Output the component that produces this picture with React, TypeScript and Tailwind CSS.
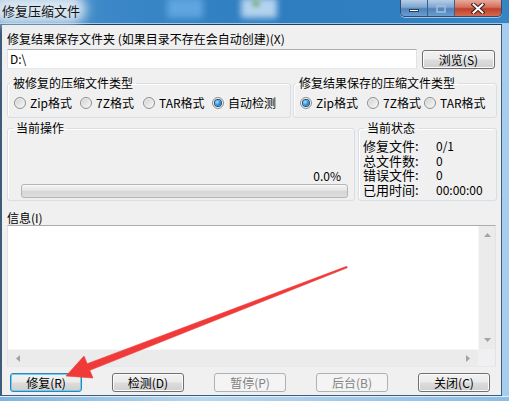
import type { ReactNode } from "react";

type BtnKind = "normal" | "focus" | "disabled";

const btnStyles: Record<BtnKind, string> = {
  normal:
    "border-[#707070] bg-[linear-gradient(#f2f2f2_0%,#ebebeb_48%,#dddddd_52%,#cfcfcf_100%)] text-black shadow-[inset_0_0_0_1px_#fbfbfb]",
  focus:
    "border-[#3c7fb1] bg-[linear-gradient(#f2f2f2_0%,#ebebeb_48%,#dddddd_52%,#cfcfcf_100%)] text-black shadow-[inset_0_0_0_1px_#5fd3f8]",
  disabled: "border-[#adb2b5] bg-[#f4f4f4] text-[#838383]",
};

function Btn({ children, kind = "normal", className = "" }: { children: ReactNode; kind?: BtnKind; className?: string }) {
  return (
    <button
      type="button"
      className={`flex h-[19px] items-center justify-center rounded-[3px] border text-[12px] leading-none ${btnStyles[kind]} ${className}`}
    >
      {children}
    </button>
  );
}

function Radio({ label, checked, className = "" }: { label: string; checked?: boolean; className?: string }) {
  return (
    <div className={`flex items-center gap-[4px] ${className}`}>
      <span className="flex h-[12px] w-[12px] shrink-0 items-center justify-center rounded-full border border-[#8e8f8f] bg-[linear-gradient(135deg,#cfd0d0,#f9f9f9)] shadow-[inset_0_0_0_1px_#f1f1f1]">
        {checked && (
          <span className="h-[6px] w-[6px] rounded-full bg-[radial-gradient(circle_at_35%_35%,#a6e4ff,#2c8ad2_55%,#0f4f94)] shadow-[0_0_0_1px_#1b5390]" />
        )}
      </span>
      <span className="whitespace-nowrap font-normal">{label}</span>
    </div>
  );
}

function Group({
  title,
  className = "",
  legendClass = "ml-[2px]",
  children,
}: {
  title: string;
  className?: string;
  legendClass?: string;
  children: ReactNode;
}) {
  return (
    <fieldset className={`rounded-[3px] border border-[#d5dfe5] shadow-[inset_1px_1px_0_#fff] ${className}`}>
      <legend className={`px-[3px] leading-[14px] ${legendClass}`}>{title}</legend>
      {children}
    </fieldset>
  );
}

function Arrow({ dir }: { dir: "up" | "down" | "left" | "right" }) {
  const pts = {
    up: "0,4 3.5,0 7,4",
    down: "0,0 3.5,4 7,0",
    left: "4,0 0,3.5 4,7",
    right: "0,0 4,3.5 0,7",
  }[dir];
  const vertical = dir === "up" || dir === "down";
  return (
    <svg width={vertical ? 7 : 4} height={vertical ? 4 : 7} viewBox={vertical ? "0 0 7 4" : "0 0 4 7"}>
      <polygon points={pts} fill="#a3a3a3" />
    </svg>
  );
}

function WindowControls() {
  return (
    <div className="absolute right-[7px] top-0 flex h-[17px] overflow-hidden rounded-b-[5px] border border-t-0 border-[#2f4d6e] shadow-[0_1px_0_#9cc4e6]">
      <div className="flex w-[27px] items-end justify-center border-r border-[#3c5f86] bg-[linear-gradient(#b5cde6_0%,#7ea6d1_45%,#4e82bb_55%,#6a9dd0_100%)] pb-[4px]">
        <span className="h-[3px] w-[10px] border border-[#2b3f57] bg-white" />
      </div>
      <div className="flex w-[27px] items-center justify-center border-r border-[#3c5f86] bg-[linear-gradient(#b5cde6_0%,#7ea6d1_45%,#4e82bb_55%,#6a9dd0_100%)]">
        <span className="mt-[1px] h-[8px] w-[10px] border-2 border-[#9fbddd] opacity-80" />
      </div>
      <div className="flex w-[46px] items-center justify-center bg-[linear-gradient(#e9a99b_0%,#d4705d_45%,#c0402c_55%,#d56a4f_100%)]">
        <svg width="14" height="11" viewBox="0 0 14 11">
          <path d="M2.5 1.5 L11.5 9.5 M11.5 1.5 L2.5 9.5" stroke="#3b1d1a" strokeWidth="4" strokeLinecap="square" />
          <path d="M2.5 1.5 L11.5 9.5 M11.5 1.5 L2.5 9.5" stroke="#ffffff" strokeWidth="2" strokeLinecap="square" />
        </svg>
      </div>
    </div>
  );
}

const statusRows: [string, string][] = [
  ["修复文件:", "0/1"],
  ["总文件数:", "0"],
  ["错误文件:", "0"],
  ["已用时间:", "00:00:00"],
];

export default function App() {
  return (
    <div className="relative flex h-[401px] w-[509px] flex-col overflow-hidden bg-[#a6cdee] font-['Noto_Sans_CJK_SC',sans-serif] text-[12px] text-black">
      {/* title bar */}
      <div className="relative h-[24px] shrink-0 border-b border-[#a3c9ea] bg-[linear-gradient(90deg,#5b9ad2_0%,#3b87c7_22%,#2d7dbf_55%,#2f7fc1_80%,#3785c5_100%)]">
        <div className="absolute left-[167px] top-[-2px] h-[20px] w-[36px] bg-[#5fa5df] blur-[3px]" />
        <div className="absolute left-[241px] top-[-2px] h-[20px] w-[36px] bg-[#b5d3ee] blur-[3px]" />
        <div className="absolute left-[252px] top-[0px] h-[7px] w-[8px] rounded-full bg-[#7db58a] blur-[2px]" />
        <div className="absolute left-[-10px] top-[-6px] h-[30px] w-[96px] rounded-full bg-[#d9e6f1] blur-[6px]" />
        <div className="relative pl-[2px] pt-[3px] text-[13px] leading-[15px] text-[#111]">修复压缩文件</div>
        <WindowControls />
      </div>

      {/* client area */}
      <div className="flex h-[372px] w-[502px] shrink-0 flex-col border border-l-2 border-[#3f5b7a] border-t-[#1f3d5e] bg-[#f0f0f0] pl-[5px] pr-[4px] pt-[7px]">
        <div className="leading-[14px]">修复结果保存文件夹 (如果目录不存在会自动创建)(X)</div>

        <div className="mt-[3px] flex h-[20px] items-start">
          <div className="flex h-[20px] w-[410px] items-center border border-[#e2e3ea] border-t-[#abadb3] border-b-[#e3e9ef] bg-white pl-[2px] leading-none">
            D:\
          </div>
          <Btn className="ml-[5px] mt-[1px] w-[73px]">浏览(S)</Btn>
        </div>

        <div className="mt-[7px] flex gap-[2px]">
          <Group title="被修复的压缩文件类型" className="h-[42px] w-[284px]">
            <div className="mt-[6px] flex h-[14px] items-center pl-[6px]">
              <Radio label="Zip格式" className="w-[66px]" />
              <Radio label="7Z格式" className="w-[63px]" />
              <Radio label="TAR格式" className="w-[69px]" />
              <Radio label="自动检测" checked />
            </div>
          </Group>
          <Group title="修复结果保存的压缩文件类型" className="h-[42px] w-[204px]">
            <div className="mt-[6px] flex h-[14px] items-center pl-[6px]">
              <Radio label="Zip格式" checked className="w-[67px]" />
              <Radio label="7Z格式" className="w-[57px]" />
              <Radio label="TAR格式" />
            </div>
          </Group>
        </div>

        <div className="mt-[3px] flex gap-[3px]">
          <Group title="当前操作" className="h-[80px] w-[348px]" legendClass="ml-[5px]">
            <div className="pl-[13px] pr-[6px] pt-[34px]">
              <div className="pr-[7px] text-right leading-[14px]">0.0%</div>
              <div className="mt-[1px] h-[14px] rounded-[3px] border border-[#b4b4b4] bg-[linear-gradient(#f4f4f4_0%,#e4e4e4_45%,#d6d6d6_55%,#dfdfdf_100%)] shadow-[inset_0_1px_0_#fafafa]" />
            </div>
          </Group>
          <Group title="当前状态" className="h-[80px] w-[139px]" legendClass="ml-[5px]">
            <div className="pl-[4px] pt-[4px]">
              {statusRows.map(([k, v]) => (
                <div key={k} className="flex h-[14.5px] items-center leading-[14px]">
                  <span className="w-[73px] text-[13px] leading-[14px]">{k}</span>
                  <span className="leading-[14px]">{v}</span>
                </div>
              ))}
            </div>
          </Group>
        </div>

        <div className="mt-[10px] leading-[14px]">信息(I)</div>

        <div className="grid h-[142px] w-[489px] grid-cols-[1fr_17px] grid-rows-[1fr_17px] border border-[#e2e3ea] border-t-[#abadb3] border-b-[#e3e9ef] bg-white">
          <div />
          <div className="flex flex-col items-center justify-between border-l border-[#f7f7f7] bg-[#ebebeb] py-[7px]">
            <Arrow dir="up" />
            <Arrow dir="down" />
          </div>
          <div className="flex items-center justify-between border-t border-[#f7f7f7] bg-[#ebebeb] px-[8px]">
            <Arrow dir="left" />
            <Arrow dir="right" />
          </div>
          <div className="bg-[#f0f0f0]" />
        </div>

        <div className="mt-[6px] flex gap-[30px] pl-[3px]">
          <Btn kind="focus" className="w-[72px]">修复(R)</Btn>
          <Btn className="w-[72px]">检测(D)</Btn>
          <Btn kind="disabled" className="w-[72px]">暂停(P)</Btn>
          <Btn kind="disabled" className="w-[72px]">后台(B)</Btn>
          <Btn className="w-[72px]">关闭(C)</Btn>
        </div>
      </div>

      {/* bottom frame */}
      <div className="h-[5px] border-t border-[#e4eef7] bg-[linear-gradient(90deg,#7fb3e0,#b7d6ef_40%,#8dbce4)]" />

      {/* red annotation arrow */}
      <svg className="pointer-events-none absolute left-0 top-0" width="509" height="401" viewBox="0 0 509 401">
        <polygon
          points="66,376 84,356 87.2,363.7 346.7,266.3 347.3,267.7 89.8,370.3 93,378"
          fill="#f03a3a"
          stroke="#f03a3a"
          strokeWidth="0.6"
          strokeLinejoin="round"
        />
      </svg>
    </div>
  );
}
